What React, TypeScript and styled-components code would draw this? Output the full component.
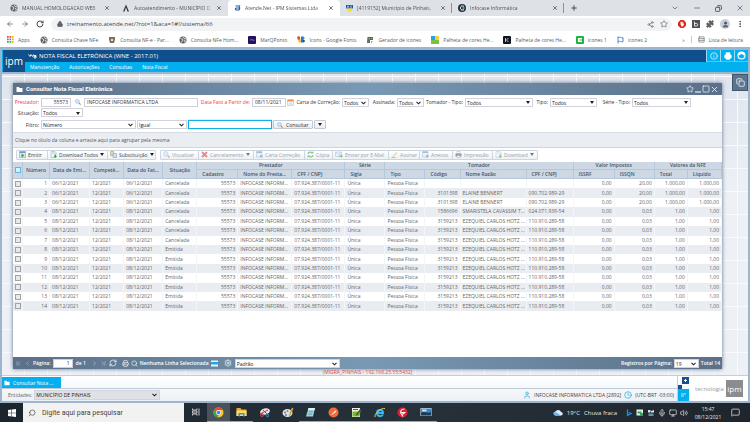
import React from "react";
import styled, { createGlobalStyle, css } from "styled-components";
import {
  ArrowLeft, ArrowRight, RotateCw, Lock, Star, Puzzle, User, MoreVertical, X, Plus, Minus, Copy,
  ChevronDown, Share2, Printer, Info, Search, RefreshCw, Settings, Square, ChevronLeft, ChevronRight,
  ChevronFirst, ChevronLast, Clock, MessageSquare, Volume2, Monitor, Mic, Rows3,
} from "lucide-react";

const ui = `"Open Sans", "Noto Sans", sans-serif`;

const Global = createGlobalStyle`
  *, *::before, *::after { box-sizing: border-box; }
  html, body { margin: 0; padding: 0; }
  body { font: 5px/8px ${ui}; color: #444; overflow: hidden; }
  button, input, select { font: inherit; color: inherit; margin: 0; padding: 0; border: 0; background: none; border-radius: 0; outline: 0; min-width: 0; }
  a { color: inherit; text-decoration: none; }
  svg { display: block; flex: none; }
`;

const Screen = styled.div`
  min-height: 100vh;
  display: flex;
  flex-direction: column;
`;

/* ---------- browser ---------- */
const TabStrip = styled.div`
  height: 16px;
  padding: 0 6px 0 4px;
  display: flex;
  align-items: center;
  background: #dee1e6;
`;
const Tab = styled.div<{ $active?: boolean; $line?: boolean }>`
  flex: 0 1 112px;
  min-width: 0;
  height: ${(p) => (p.$active ? 16 : 10)}px;
  display: flex;
  align-items: center;
  gap: 4px;
  padding: 0 5px 0 6px;
  color: #4e5257;
  background: ${(p) => (p.$active ? "#fff" : "transparent")};
  border-radius: 4px 4px 0 0;
  border-right: 1px solid ${(p) => (p.$line ? "#8d9196" : "transparent")};
  ${(p) => p.$line && css`border-radius: 0;`}
`;
const TabTitle = styled.span`
  flex: 1;
  white-space: nowrap;
  mask-image: linear-gradient(90deg, #000 88%, #0004);
`;
const PlainButton = styled.button`
  display: grid;
  place-items: center;
  color: #4b4f54;
`;
const WindowControls = styled.div`
  margin-left: auto;
  display: flex;
  gap: 14px;
`;
const NewTab = styled(PlainButton)`
  margin-left: 6px;
`;
const AddressRow = styled.div`
  height: 16px;
  display: flex;
  align-items: center;
  padding: 0 6px;
  gap: 6px;
  background: #fff;
  color: #5f6368;
`;
const AddressBar = styled.div`
  flex: 1;
  height: 13px;
  border-radius: 7px;
  background: #f1f3f4;
  display: flex;
  align-items: center;
  gap: 4px;
  padding: 0 3px 0 6px;
  font-size: 6px;
`;
const AddressInput = styled.input`
  flex: 1;
  color: #44474b;
`;
const NavButtons = styled.div`
  display: flex;
  gap: 7px;
  width: 39px;
`;
const Avatar = styled(PlainButton)`
  width: 10px;
  height: 10px;
  border-radius: 50%;
  background: #c9ced6;
`;
const Bookmarks = styled.nav`
  height: 15px;
  display: flex;
  align-items: center;
  gap: 10px;
  padding: 0 7px;
  background: #fff;
  color: #5a5d61;
  white-space: nowrap;
`;
const Bookmark = styled.a`
  display: flex;
  align-items: center;
  gap: 4px;
`;
const BookmarkEnd = styled.div`
  margin-left: auto;
  display: flex;
  align-items: center;
  gap: 6px;
`;
const Divider = styled.span`
  width: 1px;
  height: 7px;
  background: #c4c7cb;
`;

/* ---------- application ---------- */
const AppFrame = styled.div`
  flex: 1;
  display: flex;
  flex-direction: column;
  padding: 3px 2px 2px;
  background: #9db5cd;
`;
const AppHeader = styled.header`
  display: flex;
  height: 22px;
  padding-left: 1px;
  margin-bottom: 2px;
  background: #03b0ef;
`;
const LogoBox = styled.div`
  width: 22px;
  display: grid;
  place-items: center;
  background: #10508b;
  color: #fff;
  font-size: 10px;
  line-height: 18px;
`;
const HeaderMain = styled.div`
  flex: 1;
  display: flex;
  flex-direction: column;
`;
const HeaderTitle = styled.h1`
  margin: 0;
  height: 12px;
  display: flex;
  align-items: center;
  gap: 2px;
  padding-left: 3px;
  background: #0f4f8b;
  color: #fff;
  font-size: 6px;
  font-weight: 500;
`;
const Menu = styled.nav`
  flex: 1;
  display: flex;
  align-items: center;
  gap: 10px;
  padding-left: 5px;
  color: #fff;
`;
const HeaderButtons = styled.div`
  display: flex;
  height: 12px;
`;
const HeaderButton = styled(PlainButton)`
  width: 14px;
  color: #fff;
  border-left: 1px solid #9adcf5;
  border-bottom: 1px solid #55c8f0;
`;
const Desktop = styled.main`
  flex: 1;
  display: flex;
  padding: 9px 0 0 11px;
  background:
    repeating-linear-gradient(90deg, transparent 0 22px, #f8fafc 22px 23px),
    repeating-linear-gradient(0deg, transparent 0 22px, #f8fafc 22px 23px),
    linear-gradient(#dfe5ee, #edf1f6 40%, #edf1f6);
`;
const DesktopCenter = styled.div`
  flex: 1;
  min-width: 0;
  display: flex;
  flex-direction: column;
`;
const SideRail = styled.div`
  width: 26px;
  padding-left: 10px;
  margin-top: -9px;
`;
const RailButton = styled(PlainButton)`
  width: 16px;
  height: 17px;
  background: #5d7690;
  border: 1px solid #40566f;
  color: #fff;
`;
const WindowBox = styled.section`
  flex: 1;
  display: flex;
  flex-direction: column;
  background: #fff;
  box-shadow: 0 0 4px 0 #5c708a;
`;
const barFill = css`
  background: linear-gradient(90deg, #5b7089, #7899b4 50%, #5b7089);
  color: #fff;
`;
const WindowTitle = styled.h2`
  margin: 0;
  height: 12px;
  display: flex;
  align-items: center;
  gap: 3px;
  padding: 0 3px;
  font-family: Roboto, ${ui};
  font-size: 6px;
  font-weight: 700;
  ${barFill}
`;
const TitleButtons = styled.div`
  margin-left: auto;
  display: flex;
  button { color: #fff; }
`;
const Filters = styled.form`
  height: 37px;
  padding-top: 2px;
  display: flex;
  flex-direction: column;
  color: #333;
`;
const FilterRow = styled.div<{ $h: number }>`
  height: ${(p) => p.$h}px;
  display: flex;
  align-items: center;
  gap: 1px;
`;
const Label = styled.label<{ $w: number; $red?: boolean }>`
  width: ${(p) => p.$w}px;
  text-align: right;
  white-space: nowrap;
  padding-right: 1px;
  color: ${(p) => (p.$red ? "#f0353a" : "#333")};
`;
const TextInput = styled.input<{ $w: number; $right?: boolean; $focus?: boolean }>`
  width: ${(p) => p.$w}px;
  height: 9px;
  padding: 0 2px;
  background: #fff;
  border: 1px solid ${(p) => (p.$focus ? "#16aee8" : "#cfcfda")};
  text-align: ${(p) => (p.$right ? "right" : "left")};
  ${(p) => p.$focus && css`box-shadow: 0 0 1px #16aee8;`}
`;
const SelectBox = styled.span<{ $w: number; $h?: number; $fill?: string }>`
  width: ${(p) => p.$w}px;
  height: ${(p) => p.$h ?? 9}px;
  display: inline-grid;
  align-items: center;
  background: ${(p) => p.$fill ?? "#fff"};
  border: 1px solid #d2d2dc;
  color: #222;
  > * { grid-area: 1 / 1; }
  > svg { justify-self: end; margin-right: 2px; pointer-events: none; }
  select { width: 100%; height: 8px; line-height: 8px; appearance: none; padding: 0 1px; }
`;
const IconSlot = styled.span`
  width: 11px;
  display: grid;
  place-items: center;
`;
const SearchButton = styled.button`
  height: 9px;
  display: flex;
  align-items: center;
  gap: 3px;
  padding: 0 3px;
  border: 1px solid #c4cad4;
  background: linear-gradient(#fff, #e8ecf1);
  border-radius: 1px;
`;
const GroupHint = styled.div`
  height: 16px;
  display: flex;
  align-items: center;
  padding-left: 2px;
  background: #eaeef3;
  border-top: 1px solid #d5dce5;
  border-bottom: 1px solid #cdd6e0;
  color: #555;
`;
const Toolbar = styled.div`
  height: 14px;
  display: flex;
  align-items: center;
  gap: 4px;
  padding: 0 0 1px 3px;
`;
const ToolGroup = styled.div`
  display: flex;
  border: 1px solid #ccd6e1;
  background: linear-gradient(#fff, #edf1f5);
  border-radius: 1px;
`;
const ToolButton = styled.button<{ $w: number }>`
  width: ${(p) => p.$w}px;
  height: 8px;
  display: flex;
  align-items: center;
  gap: 2px;
  padding-left: 2px;
  white-space: nowrap;
  color: #444;
  & + & { border-left: 1px solid #ccd6e1; }
  &:disabled { color: #a0a0a6; }
  &:disabled svg { opacity: 0.6; }
`;

/* ---------- grid ---------- */
const GridArea = styled.div`
  flex: 1;
`;
const DataTable = styled.table`
  width: 100%;
  height: 149px;
  table-layout: fixed;
  border-collapse: separate;
  border-spacing: 0;
  color: #666;
  th, td {
    padding: 0 0 0 2px;
    white-space: nowrap;
    line-height: 7px;
  }
  th {
    height: 8px;
    background: #cdd8e4;
    color: #485466;
    font-weight: 600;
    border-right: 1px solid #b5c7da;
    border-bottom: 1px solid #b5c7da;
  }
  thead tr + tr th { height: 9px; }
  td { border-right: 1px solid #f3f6f9; height: 9px; }
  tbody tr:nth-child(even) { background: #e9edf2; }
`;
const Th = styled.th<{ $left?: boolean }>`
  && { padding: ${(p) => (p.$left ? "0 0 0 5px" : "0")}; }
  text-align: ${(p) => (p.$left ? "left" : "center")};
`;
const Td = styled.td<{ $right?: boolean }>`
  && { padding-right: ${(p) => (p.$right ? 2 : 0)}px; }
  text-align: ${(p) => (p.$right ? "right" : "left")};
`;
const Check = styled.input<{ $blue?: boolean }>`
  appearance: none;
  display: block;
  width: 6px;
  height: 6px;
  margin-left: ${(p) => (p.$blue ? 2 : 0)}px;
  border: 1px solid ${(p) => (p.$blue ? "#5bb8e0" : "#a2a2a2")};
  background: ${(p) => (p.$blue ? "#d8f0fb" : "#e9e9e9")};
`;

/* ---------- window footer ---------- */
const Pager = styled.footer`
  height: 12px;
  display: flex;
  align-items: center;
  gap: 3px;
  padding: 0 2px;
  font-weight: 600;
  white-space: nowrap;
  ${barFill}
  button { color: #fff; }
  input, select { font-weight: 400; color: #222; }
`;
const PagerPart = styled.div`
  display: flex;
  align-items: center;
  gap: 2px;
`;
const PagerTools = styled(PagerPart)`
  margin: 0 3px 0 2px;
`;
const PagerEnd = styled(PagerPart)`
  margin-left: auto;
`;
const PageCount = styled.span`
  margin: 0 3px 0 1px;
`;
const DbLabel = styled.div`
  height: 6px;
  line-height: 6px;
  text-align: center;
  color: #ea4548;
`;
const Dock = styled.div`
  display: flex;
  border-top: 1px solid #c3cedc;
  background: linear-gradient(#fff, #edf0f4);
`;
const DockMain = styled.div`
  flex: 1;
`;
const DockTabs = styled.div`
  height: 13px;
  padding-top: 1px;
  border-bottom: 1px solid #bfcbd9;
`;
const DockTab = styled.button`
  width: 59px;
  height: 11px;
  display: flex;
  align-items: center;
  gap: 3px;
  padding-left: 2px;
  background: #03b0ef;
  color: #fff;
`;
const StatusRow = styled.div`
  height: 12px;
  display: flex;
  align-items: center;
  gap: 2px;
  padding: 0 3px 0 6px;
  color: #666;
`;
const StatusInfo = styled.div`
  margin-left: auto;
  display: flex;
  align-items: center;
  gap: 3px;
  color: #454545;
  svg { color: #18a8e6; }
`;
const DockBadge = styled.div`
  width: 13px;
  border-left: 1px solid #c3cedc;
`;
const BrandPanel = styled.div`
  width: 58px;
  height: 25px;
  display: flex;
  align-items: center;
  gap: 2px;
  padding-left: 5px;
  background: #fff;
  color: #9a9a9a;
  font-size: 6px;
`;
const BrandBox = styled.span`
  width: 17px;
  height: 17px;
  display: grid;
  place-items: center;
  background: #8b8c8f;
  color: #fff;
  font-size: 8px;
  line-height: 14px;
`;

/* ---------- operating system bar ---------- */
const TaskBar = styled.footer`
  height: 19px;
  display: flex;
  background: linear-gradient(90deg, #1b252d, #27313a 55%, #1f252c);
  color: #e8e8e8;
`;
const StartButton = styled(PlainButton)`
  width: 23px;
`;
const TaskSearch = styled.label`
  width: 161px;
  display: flex;
  align-items: center;
  gap: 6px;
  padding-left: 5px;
  background: #f2f2f2;
  color: #444;
  font-family: Roboto, ${ui};
  font-size: 7px;
  input { flex: 1; }
  input::placeholder { color: #444; opacity: 1; }
`;
const TaskButton = styled.button<{ $on?: boolean; $line?: boolean }>`
  width: 23px;
  display: grid;
  place-items: center;
  background: ${(p) => (p.$on ? "#4a535a" : "transparent")};
  border-bottom: 1px solid ${(p) => (p.$line ? "#76aee0" : "transparent")};
`;
const Tray = styled.div`
  margin-left: auto;
  display: flex;
  align-items: center;
  gap: 4px;
  padding-right: 10px;
  font-size: 6px;
`;
const TrayIcons = styled.div`
  display: flex;
  gap: 3px;
  padding-left: 4px;
`;
const ClockText = styled.time`
  width: 32px;
  text-align: center;
  font-size: 5px;
  margin-right: 3px;
`;

/* ---------- drawings ---------- */
const Arrow = () => (
  <svg width="4" height="3" viewBox="0 0 4 3"><path d="M0 0h4L2 3z" fill="#222" /></svg>
);
const Caret = () => (
  <svg width="5" height="4" viewBox="0 0 5 4"><path d="M.5.8l2 2 2-2" fill="none" stroke="#222" strokeWidth="1.1" /></svg>
);
const Globe = () => (
  <svg width="8" height="8" viewBox="0 0 16 16"><circle cx="8" cy="8" r="7" fill="#5a5e63" /><path d="M3 5l4 1 1 3-2 1-1 3M9 2l1 3 4 1M10 9l3 1-2 3" stroke="#fff" strokeWidth="1.6" fill="none" /></svg>
);
const Folder = ({ s = 7 }: { s?: number }) => (
  <svg width={s} height={s} viewBox="0 0 14 14"><path d="M1 2h5l1 2h6v8H1z" fill="#fff" /></svg>
);
const Lens = ({ s = 7 }: { s?: number }) => (
  <svg width={s} height={s} viewBox="0 0 14 14"><path d="M9 9l4 4" stroke="#b9823e" strokeWidth="2.4" /><circle cx="5.5" cy="5.5" r="4.5" fill="#cfe8fa" stroke="#8bb4d6" strokeWidth="1.4" /></svg>
);
const Sheet = ({ c, mark }: { c: string; mark: string }) => (
  <svg width="7" height="7" viewBox="0 0 14 14"><path d="M2 1h8l2 2v10H2z" fill="#f4f8fc" stroke="#8aa2bf" /><path d="M4 4h6" stroke="#9db9d6" strokeWidth="1.4" /><path d={mark} fill={c} /></svg>
);
const toolIcons: Record<string, React.ReactNode> = {
  emit: <svg width="7" height="7" viewBox="0 0 14 14"><path d="M1 1h12v12H1z" fill="#d9e9f6" stroke="#6f9dc8" /><path d="M1 1h12v3H1z" fill="#6f9dc8" /><path d="M5 5l6 4-6 4z" fill="#3fa43a" /></svg>,
  down: <Sheet c="#45a63c" mark="M9 7h3v3h2l-3.500 4L7 10h2z" />,
  swap: <svg width="7" height="7" viewBox="0 0 14 14"><path d="M1 1h6v8H1z" fill="#e9d9a6" stroke="#a48d4e" /><path d="M6 5h7v8H6z" fill="#cfe0f2" stroke="#6f93bd" /></svg>,
  lens: <Lens />,
  cross: <svg width="7" height="7" viewBox="0 0 14 14"><path d="M2 2l10 10M12 2L2 12" stroke="#d8433d" strokeWidth="3.600" /></svg>,
  table: <svg width="7" height="7" viewBox="0 0 14 14"><path d="M1 1h11v11H1z" fill="#e4eef8" stroke="#6f93bd" /><path d="M1 1h11v3H1z" fill="#6f93bd" /><path d="M8 8h5v5H8z" fill="#5c9cd8" /></svg>,
  copy: <svg width="7" height="7" viewBox="0 0 14 14"><path d="M2 6c0-4 6-5 8-2M12 8c0 4-6 5-8 2" fill="none" stroke="#45a63c" strokeWidth="2.400" /><path d="M8 5h5V0zM6 9H1v5z" fill="#45a63c" /></svg>,
  mail: <svg width="8" height="7" viewBox="0 0 16 14"><path d="M1 2h12v9H1z" fill="#e4eef8" stroke="#6f93bd" /><path d="M1 2l6 5 6-5" fill="none" stroke="#6f93bd" /><path d="M8 9h4V6l4 4-4 4v-2H8z" fill="#45a63c" /></svg>,
  pen: <svg width="7" height="7" viewBox="0 0 14 14"><path d="M2 12L11 2l2 2-9 8z" fill="#e9b64c" /><path d="M1 13h8" stroke="#777" strokeWidth="1.400" /></svg>,
  print: <svg width="7" height="7" viewBox="0 0 14 14"><path d="M4 1h6v4H4z" fill="#fff" stroke="#777" /><path d="M1 5h12v6H1z" fill="#555d66" /><path d="M4 9h6v4H4z" fill="#fff" stroke="#777" /></svg>,
};

const bookmarkIcons: Record<string, React.ReactNode> = {
  apps: <svg width="7" height="7" viewBox="0 0 14 14">{["#e8453c", "#e8453c", "#f4b400", "#34a853", "#4285f4", "#f4b400", "#34a853", "#34a853", "#f4b400"].map((c, i) => <rect key={i} x={(i % 3) * 5} y={Math.floor(i / 3) * 5} width="3.400" height="3.400" fill={c} />)}</svg>,
  globe: <Globe />,
  par: <svg width="8" height="8" viewBox="0 0 16 16"><path d="M2 2h12v5l-2 7H4L2 7z" fill="#61806c" /><circle cx="8" cy="8" r="3.600" fill="#e03c3c" /><path d="M6 6h4v4H6z" fill="#f4dcd0" /></svg>,
  marq: <svg width="8" height="8" viewBox="0 0 18 18"><rect width="18" height="18" rx="2" fill="#23105f" /><path d="M4 9h3l2-2 2 4 2-2h2" stroke="#a99be0" strokeWidth="1.400" fill="none" /></svg>,
  gf: <svg width="8" height="7" viewBox="0 0 16 14"><path d="M0 1h5l4 12H4z" fill="#fbbc04" /><path d="M1 1h5v6H1z" fill="#ea4335" /><path d="M8 1h4v12H8z" fill="#1a73e8" /><path d="M12 1c4 0 4 6 0 6z" fill="#34a853" /><path d="M12 7c5 0 5 6 0 6z" fill="#0d652d" /></svg>,
  ger: <svg width="8" height="8" viewBox="0 0 16 16"><path d="M3 2h11v6H8v6H2z" fill="#56645a" /><path d="M5 4h3v3H5z" fill="#dd8d4a" /><path d="M10 4h3v2h-3z" fill="#7fc468" /><path d="M3 10h3v3H3zM10 10l3 1-2 4z" fill="#4a85c9" /></svg>,
  pal: <svg width="8" height="8" viewBox="0 0 16 16"><path d="M0 0h16v8H0z" fill="#23a4e0" /><path d="M0 8h16v8H0z" fill="#7cc043" /><path d="M8 0h8v8H8z" fill="#f3d231" /></svg>,
  dark: <svg width="8" height="8" viewBox="0 0 16 16"><rect width="16" height="16" rx="2" fill="#10141f" /><path d="M5 4v8M11 4l-4 4 4 4" stroke="#e8ecf4" strokeWidth="1.600" fill="none" /></svg>,
  green: <svg width="8" height="8" viewBox="0 0 16 16"><rect width="16" height="16" rx="2" fill="#1fb340" /><path d="M4 4h8v8H4z" fill="#fff" /><path d="M7 7h6v2H7z" fill="#1fb340" /></svg>,
  flag: <svg width="7" height="8" viewBox="0 0 14 16"><path d="M2 1v14M2 3c4-2 6 2 10 0v8c-4 2-6-2-10 0" stroke="#4a8be0" strokeWidth="2" fill="none" /></svg>,
};

const Lambda = () => <svg width="8" height="8" viewBox="0 0 16 16"><path d="M2 15L8 1l6 14h-3L8 7l-3 8z" fill="#35383d" /></svg>;
const IpmMark = () => <svg width="7" height="8" viewBox="0 0 14 16"><path d="M3 4h6c3 0 3 8 0 8H5c-3 0-3-4 0-4h5" fill="none" stroke="#1e5ea6" strokeWidth="2.400" /><circle cx="11" cy="3" r="1.600" fill="#24b1ea" /></svg>;
const AcMark = () => <svg width="7" height="8" viewBox="0 0 14 16"><path d="M0 2h14v7H0z" fill="#1b56ac" /><path d="M2 8l2-5 2 5M12 4c-4-2-4 5 0 3" fill="none" stroke="#fff" /><path d="M2 9h11l-3 6H4z" fill="#f7dc2d" /></svg>;
const InfoMark = () => <svg width="8" height="8" viewBox="0 0 16 16"><circle cx="8" cy="8" r="8" fill="#2b3138" /><path d="M12 5C8 2 4 5 5 9s5 4 7 2" fill="none" stroke="#fff" strokeWidth="2" /><path d="M9 6h4v4H9z" fill="#2da4d8" /></svg>;

const osIcons: Record<string, React.ReactNode> = {
  chrome: <svg width="11" height="11" viewBox="0 0 22 22"><circle cx="11" cy="11" r="10" fill="#f9c62b" /><path d="M2.300 6A10 10 0 0119.700 6H11a5 5 0 00-4.600 7z" fill="#e4463a" /><path d="M2.300 6l4.400 7.600A5 5 0 0011 16l-1.500 5A10 10 0 012.300 6z" fill="#36a852" /><circle cx="11" cy="11" r="4.800" fill="#fff" /><circle cx="11" cy="11" r="3.700" fill="#4285f4" /></svg>,
  explorer: <svg width="11" height="10" viewBox="0 0 22 20"><path d="M1 2h8l2 3h10v13H1z" fill="#e8a92f" /><path d="M1 7h20v11H1z" fill="#fbd968" /><path d="M5 12h12v7h-3v-4H8v4H5z" fill="#3a93dc" /></svg>,
  snip: <svg width="12" height="11" viewBox="0 0 24 22"><ellipse cx="12" cy="9" rx="10" ry="6" fill="#e9e6ea" transform="rotate(-15 12 9)" /><path d="M4 13l14-7M8 6l9 9" stroke="#c0353c" strokeWidth="2" /><circle cx="6" cy="16" r="3" fill="none" stroke="#d8414a" strokeWidth="2" /><circle cx="17" cy="17" r="2.500" fill="none" stroke="#4a8fd0" strokeWidth="2" /></svg>,
  paint: <svg width="12" height="11" viewBox="0 0 24 22"><ellipse cx="11" cy="12" rx="10" ry="8" fill="#d8e3ea" /><circle cx="6" cy="11" r="2" fill="#e34b43" /><circle cx="11" cy="8" r="2" fill="#4bab4a" /><circle cx="8" cy="16" r="2" fill="#3d7fd6" /><path d="M13 17L20 1l3 2-7 15z" fill="#e09b3a" /></svg>,
  note: <svg width="11" height="11" viewBox="0 0 22 22"><path d="M7 2h13l-4 17H2z" fill="#9fd4de" /><path d="M7 2h13l-1 4H6z" fill="#e7eef0" /><path d="M8 9h8M7 12h8M6 15h8" stroke="#4b8b98" /></svg>,
  post: <svg width="11" height="11" viewBox="0 0 22 22"><circle cx="11" cy="11" r="10" fill="#f26b3a" /><path d="M6 16l9-9 2 2-8 6z" fill="#fff" /></svg>,
  npp: <svg width="11" height="11" viewBox="0 0 22 22"><path d="M2 2h16v18H2z" fill="#eef3e8" /><path d="M3 9h16l-2 10H3z" fill="#78b82a" /><path d="M9 16L18 4l3 2-9 11z" fill="#4c5b34" /><path d="M4 5h10" stroke="#555" strokeWidth="2" /></svg>,
  ie: <svg width="12" height="11" viewBox="0 0 24 22"><path d="M18 15c-4 6-12 3-12-3 0-8 12-8 12 0H7" fill="none" stroke="#3cb4ec" strokeWidth="4" /><path d="M2 20C0 14 14 1 22 3" fill="none" stroke="#f5cf3c" strokeWidth="2" /></svg>,
  red: <svg width="11" height="11" viewBox="0 0 22 22"><circle cx="11" cy="11" r="10" fill="#da2334" /><path d="M15 4c-7 0-9 5-7 9l4 6M9 11h8M10 14l5-1" stroke="#fff" strokeWidth="2.200" fill="none" /></svg>,
  pic: <svg width="12" height="10" viewBox="0 0 24 20"><path d="M1 2h22v16H1z" fill="#e8eff4" /><path d="M2 3h20v14H2z" fill="#3c86c8" /><path d="M2 12c6-5 12 2 20-2v7H2z" fill="#1c3c55" /><path d="M4 5h9v4H4z" fill="#c8e2f2" /></svg>,
};

/* ---------- data ---------- */
const bookmarks: [string, string][] = [
  ["apps", "Apps"], ["globe", "Consulta Chave NFe"], ["par", "Consulta NF-e - Par..."], ["globe", "Consulta NFe Hom..."],
  ["marq", "MarQPonto"], ["gf", "Icons - Google Fonts"], ["ger", "Gerador de icones"], ["pal", "Palheta de cores He..."],
  ["dark", "Palheta de cores He..."], ["green", "icones 1"], ["flag", "icones 2"],
];
const activeTools: [string, string, number, boolean][] = [
  ["emit", "Emitir", 30, false], ["down", "Download Todos", 60, true], ["swap", "Substituição", 48, true],
];
const lockedTools: [string, string, number, boolean][] = [
  ["lens", "Visualizar", 37, false], ["cross", "Cancelamento", 55, true], ["table", "Carta Correção", 51, false],
  ["copy", "Cópia", 28, false], ["mail", "Enviar por E-Mail", 56, false], ["pen", "Assinar", 31, false],
  ["table", "Anexos", 33, false], ["print", "Impressão", 40, false], ["down", "Download", 45, true],
];
const colWidths = [10, 27, 40, 34, 39, 34, 41, 54, 53, 40, 40, 35, 66, 47, 41, 40, 33, 34];

type Row = { date: string; status: string; code: string; name: string; doc: string; iss: string; value: string };
const ezequiel = { code: "3159213", name: "EZEQUIEL CARLOS HOTZ ...", doc: "110.910.289-58" };
const elaine = { code: "3101398", name: "ELAINE BENNERT", doc: "090.702.989-29" };
const maristela = { code: "1586696", name: "SMARISTELA CAVASSIM T...", doc: "024.071.939-54" };
const unknown = { code: "", name: "", doc: "" };
const rows: Row[] = Array.from({ length: 14 }, (_, i) => {
  const who = i === 0 ? unknown : i < 3 ? elaine : i === 3 ? maristela : ezequiel;
  return {
    ...who,
    date: i < 3 ? "06/12/2021" : "08/12/2021",
    status: i < 7 ? "Cancelada" : "Emitida",
    iss: i < 3 ? "20,00" : "0,03",
    value: i < 3 ? "1.000,00" : "1,00",
  };
});

function Select({ id, w, h, value, fill, label, solid }: { id: string; w: number; h?: number; value: string; fill?: string; label?: string; solid?: boolean }) {
  return (
    <SelectBox $w={w} $h={h} $fill={fill}>
      <select id={id} aria-label={label} defaultValue={value}><option>{value}</option></select>
      {solid ? <Arrow /> : <Caret />}
    </SelectBox>
  );
}

function Tools({ items, disabled }: { items: [string, string, number, boolean][]; disabled?: boolean }) {
  return (
    <ToolGroup>
      {items.map(([icon, text, w, more]) => (
        <ToolButton key={text} type="button" $w={w} disabled={disabled}>
          {toolIcons[icon]}{text}{more && <Arrow />}
        </ToolButton>
      ))}
    </ToolGroup>
  );
}

const CloseTab = () => <PlainButton aria-label="Fechar guia"><X size={6} strokeWidth={3} /></PlainButton>;

function Browser() {
  return (
    <>
      <TabStrip>
        <Tab><Globe /><TabTitle>MANUAL HOMOLOGACAO WEB</TabTitle><CloseTab /></Tab>
        <Tab><Lambda /><TabTitle>Autoatendimento - MUNICÍPIO D</TabTitle><CloseTab /></Tab>
        <Tab $active><IpmMark /><TabTitle>Atende.Net - IPM Sistemas Ltda</TabTitle><CloseTab /></Tab>
        <Tab $line><AcMark /><TabTitle>[4119152] Município de Pinhais,</TabTitle><CloseTab /></Tab>
        <Tab $line><InfoMark /><TabTitle>Infocase Informática</TabTitle><CloseTab /></Tab>
        <NewTab aria-label="Nova guia"><Plus size={8} strokeWidth={3} /></NewTab>
        <WindowControls>
          <PlainButton aria-label="Pesquisar guias"><ChevronDown size={8} /></PlainButton>
          <PlainButton aria-label="Minimizar"><Minus size={8} /></PlainButton>
          <PlainButton aria-label="Restaurar"><Copy size={7} strokeWidth={3} transform="scale(-1 1)" /></PlainButton>
          <PlainButton aria-label="Fechar janela"><X size={8} /></PlainButton>
        </WindowControls>
      </TabStrip>
      <AddressRow>
        <NavButtons>
          <PlainButton aria-label="Voltar"><ArrowLeft size={8} /></PlainButton>
          <PlainButton aria-label="Avançar"><ArrowRight size={8} /></PlainButton>
          <PlainButton aria-label="Recarregar"><RotateCw size={8} strokeWidth={3} /></PlainButton>
        </NavButtons>
        <AddressBar>
          <Lock size={6} fill="#5f6368" strokeWidth={3} />
          <AddressInput aria-label="Endereço" defaultValue="treinamento.atende.net/?rot=1&aca=1#!/sistema/66" />
          <Share2 size={7} />
          <IconSlot><Star size={8} /></IconSlot>
        </AddressBar>
        <PlainButton aria-label="Bloqueador"><svg width="8" height="8" viewBox="0 0 16 16"><path d="M5 0h6l5 5v6l-5 5H5l-5-5V5z" fill="#e2231a" /><path d="M5 8V4h1.500v3H7V3h1.500v4H9V4h1.500v4l1-1 1 1-3 5H7z" fill="#fff" /></svg></PlainButton>
        <PlainButton aria-label="Extensão"><svg width="8" height="8" viewBox="0 0 16 16"><path d="M0 0h16v16H0z" fill="#4d5054" /><path d="M5 3v9h4a2.500 2.500 0 000-5H5" fill="none" stroke="#fff" strokeWidth="1.600" /></svg></PlainButton>
        <PlainButton aria-label="Extensões"><Puzzle size={8} fill="#5f6368" /></PlainButton>
        <Avatar aria-label="Perfil"><User size={7} fill="#4b5a70" /></Avatar>
        <PlainButton aria-label="Menu"><MoreVertical size={8} strokeWidth={3} /></PlainButton>
      </AddressRow>
      <Bookmarks>
        {bookmarks.map(([icon, text], i) => <Bookmark key={i} href="#">{bookmarkIcons[icon]}{text}</Bookmark>)}
        <BookmarkEnd><span>»</span><Divider /><Bookmark href="#"><Rows3 size={7} />Lista de leitura</Bookmark></BookmarkEnd>
      </Bookmarks>
    </>
  );
}

function Grid() {
  return (
    <DataTable>
      <colgroup>{colWidths.map((w, i) => <col key={i} width={w} />)}</colgroup>
      <thead>
        <tr>
          <Th rowSpan={2}><Check type="checkbox" $blue aria-label="Selecionar todos" /></Th>
          {["Número", "Data de Emi...", "Competê...", "Data do Fat...", "Situação"].map((t) => <Th key={t} rowSpan={2}>{t}</Th>)}
          <Th colSpan={3}>Prestador</Th><Th>Série</Th><Th colSpan={4}>Tomador</Th><Th colSpan={2}>Valor Impostos</Th><Th colSpan={2}>Valores da NFE</Th>
        </tr>
        <tr>
          {["Cadastro", "Nome do Presta...", "CPF / CNPJ", "Sigla", "Tipo", "Código", "Nome Razão", "CPF / CNPJ", "ISSRF", "ISSQN", "Total", "Líquido"].map((t, i) => <Th key={i} $left>{t}</Th>)}
        </tr>
      </thead>
      <tbody>
        {rows.map((r, i) => (
          <tr key={i}>
            <Td><Check type="checkbox" aria-label={`Selecionar ${i + 1}`} /></Td>
            <Td $right>{i + 1}</Td>
            <Td>{r.date}</Td><Td>12/2021</Td><Td>{r.date}</Td><Td>{r.status}</Td>
            <Td $right>55573</Td><Td>INFOCASE INFORM...</Td><Td>07.924.387/0001-11</Td>
            <Td>Única</Td><Td>Pessoa Física</Td><Td $right>{r.code}</Td><Td>{r.name}</Td><Td>{r.doc}</Td>
            <Td $right>0,00</Td><Td $right>{r.iss}</Td><Td $right>{r.value}</Td><Td $right>{r.value}</Td>
          </tr>
        ))}
      </tbody>
    </DataTable>
  );
}

function InvoiceWindow() {
  return (
    <WindowBox>
      <WindowTitle><Folder /> Consultar Nota Fiscal Eletrônica
        <TitleButtons>
          <PlainButton aria-label="Favorito"><Star size={8} /></PlainButton>
          <PlainButton aria-label="Minimizar"><svg width="8" height="8" viewBox="0 0 8 8"><path d="M1 7h6" stroke="#fff" /></svg></PlainButton>
          <PlainButton aria-label="Maximizar"><Square size={8} /></PlainButton>
          <PlainButton aria-label="Fechar"><X size={9} /></PlainButton>
        </TitleButtons>
      </WindowTitle>
      <Filters onSubmit={(e) => e.preventDefault()}>
        <FilterRow $h={10}>
          <Label $w={27} $red htmlFor="prest">Prestador:</Label>
          <TextInput id="prest" $w={30} $right defaultValue="55573" />
          <IconSlot><Lens s={6} /></IconSlot>
          <TextInput aria-label="Nome do prestador" $w={114} defaultValue="INFOCASE INFORMATICA LTDA" />
          <Label $w={52} $red htmlFor="date">Data Fato a Partir de:</Label>
          <TextInput id="date" $w={34} defaultValue="08/11/2021" />
          <svg width="7" height="7" viewBox="0 0 14 14"><path d="M1 2h12v11H1z" fill="#fff" stroke="#9db5d0" /><path d="M1 1h12v4H1z" fill="#f0924e" /><path d="M3 8h8M3 10.500h8" stroke="#9db5d0" /></svg>
          <Label $w={46} htmlFor="carta">Carta de Correção:</Label>
          <Select id="carta" w={27} value="Todos" />
          <Label $w={26} htmlFor="assin">Assinada:</Label>
          <Select id="assin" w={27} value="Todos" />
          <Label $w={39} htmlFor="tomador">Tomador - Tipo:</Label>
          <Select id="tomador" w={68} value="Todos" solid />
          <Label $w={15} htmlFor="tipo">Tipo:</Label>
          <Select id="tipo" w={47} value="Todos" solid />
          <Label $w={33} htmlFor="serie">Série - Tipo:</Label>
          <Select id="serie" w={59} value="Todos" solid />
        </FilterRow>
        <FilterRow $h={11}>
          <Label $w={27} htmlFor="sit">Situação:</Label>
          <Select id="sit" w={42} value="Todos" solid />
        </FilterRow>
        <FilterRow $h={13}>
          <Label $w={27} htmlFor="filtro">Filtro:</Label>
          <Select id="filtro" w={95} value="Número" />
          <Select id="op" w={50} value="Igual" label="Operador" />
          <TextInput aria-label="Valor do filtro" $w={84} $focus />
          <SearchButton type="submit"><Lens s={6} />Consultar</SearchButton>
          <SearchButton type="button" aria-label="Mais opções"><Arrow /></SearchButton>
        </FilterRow>
      </Filters>
      <GroupHint>Clique no título da coluna e arraste aqui para agrupar pela mesma</GroupHint>
      <Toolbar><Tools items={activeTools} /><Tools items={lockedTools} disabled /></Toolbar>
      <GridArea><Grid /></GridArea>
      <Pager>
        <PagerPart>
          <PlainButton aria-label="Primeira"><ChevronFirst size={7} opacity={0.6} /></PlainButton>
          <PlainButton aria-label="Anterior"><ChevronLeft size={7} opacity={0.6} /></PlainButton>
          <label htmlFor="page">Página:</label>
          <TextInput id="page" $w={20} $right defaultValue="1" />
          <PageCount>de 1</PageCount>
          <PlainButton aria-label="Próxima"><ChevronRight size={7} opacity={0.6} /></PlainButton>
          <PlainButton aria-label="Última"><ChevronLast size={7} opacity={0.6} /></PlainButton>
          <PlainButton aria-label="Atualizar"><RefreshCw size={8} /></PlainButton>
        </PagerPart>
        <PagerTools>
          <PlainButton aria-label="Imprimir"><Printer size={7} /></PlainButton>
          <PlainButton aria-label="Pesquisar"><Search size={7} /></PlainButton>
          <span>Nenhuma Linha Selecionada</span>
          <svg width="7" height="7" viewBox="0 0 14 14"><path d="M0 1h14v12H0z" fill="#eef7fc" /><path d="M0 4h14v5H0z" fill="#1ea8e4" /></svg>
        </PagerTools>
        <PlainButton aria-label="Configurar"><Settings size={8} /></PlainButton>
        <Select id="layout" w={105} value="Padrão" label="Layout" />
        <PagerEnd>
          <label htmlFor="pp">Registros por Página:</label>
          <Select id="pp" w={25} value="19" />
          <span>Total 14</span>
        </PagerEnd>
      </Pager>
    </WindowBox>
  );
}

export default function App() {
  return (
    <Screen>
      <Global />
      <Browser />
      <AppFrame>
        <AppHeader>
          <LogoBox>ipm</LogoBox>
          <HeaderMain>
            <HeaderTitle>
              <svg width="9" height="6" viewBox="0 0 18 12"><path d="M1 3l3 4 2-4 3 4 2-4M11 5h5v5h-4V7h4" fill="none" stroke="#fff" strokeWidth="1.800" /></svg>
              NOTA FISCAL ELETRÔNICA (WNE - 2017.01)
            </HeaderTitle>
            <Menu>{["Manutenção", "Autorizações", "Consultas", "Nota Fiscal"].map((t) => <a key={t} href="#">{t}</a>)}</Menu>
          </HeaderMain>
          <HeaderButtons>
            <HeaderButton aria-label="Informações"><Info size={8} /></HeaderButton>
            <HeaderButton aria-label="Imprimir"><Printer size={8} fill="#fff" /></HeaderButton>
            <HeaderButton aria-label="Suporte"><svg width="9" height="9" viewBox="0 0 18 18"><circle cx="9" cy="9" r="8" fill="#fff" /><path d="M3 9c3 0 4-3 6-3s3 3 6 3c0 8-12 8-12 0z" fill="#03b0ef" /></svg></HeaderButton>
          </HeaderButtons>
        </AppHeader>
        <Desktop>
          <DesktopCenter>
            <InvoiceWindow />
            <DbLabel>(MIGRA_PINHAIS - 192.168.25.55:5432)</DbLabel>
          </DesktopCenter>
          <SideRail><RailButton aria-label="Janelas"><Copy size={9} /></RailButton></SideRail>
        </Desktop>
        <Dock>
          <DockMain>
            <DockTabs><DockTab><Folder s={6} />Consultar Nota ...</DockTab></DockTabs>
            <StatusRow>
              <label htmlFor="ent">Entidades:</label>
              <Select id="ent" w={126} h={10} value="MUNICÍPIO DE PINHAIS" fill="#dfe1e5" />
              <StatusInfo><User size={8} />INFOCASE INFORMATICA LTDA [2892]<Clock size={8} />(UTC-BRT -03:00)</StatusInfo>
            </StatusRow>
          </DockMain>
          <DockBadge>
            <svg width="12" height="25" viewBox="0 0 12 25"><path d="M4 1h7v7H4zM0 9h4v4H0z" fill="#164f94" /><path d="M6 4.500h3M7.500 3v3" stroke="#fff" /><path d="M0 13h11v12H0z" fill="#03b0ef" /><path d="M3 18h5M3 20h3" stroke="#b6e8fb" /></svg>
          </DockBadge>
          <BrandPanel>tecnologia<BrandBox>ipm</BrandBox></BrandPanel>
        </Dock>
      </AppFrame>
      <TaskBar>
        <StartButton aria-label="Iniciar"><svg width="8" height="8" viewBox="0 0 16 16"><path d="M0 2l7-1v6.500H0zM8 1l8-1v7.500H8zM0 8.500h7V15l-7-1zM8 8.500h8V16l-8-1z" fill="#fff" /></svg></StartButton>
        <TaskSearch><Search size={8} transform="scale(-1 1)" /><input placeholder="Digite aqui para pesquisar" /></TaskSearch>
        <TaskButton aria-label="Visão de tarefas"><svg width="8" height="8" viewBox="0 0 16 16"><path d="M1 1v3h9V1M1 15v-3h9v3M1 6h9v4H1zM14 1v14" fill="none" stroke="#e8e8e8" strokeWidth="1.600" /></svg></TaskButton>
        {Object.keys(osIcons).map((k, i) => (
          <TaskButton key={k} aria-label={k} $on={i === 0} $line={i < 2 || i > 3}>{osIcons[k]}</TaskButton>
        ))}
        <Tray>
          <svg width="10" height="7" viewBox="0 0 20 14"><path d="M5 13a4 4 0 010-8 6 6 0 0111 1 3.500 3.500 0 010 7z" fill="#dcecf9" /><path d="M5 13a4 4 0 01-2-7c4 0 6 3 13 7z" fill="#75b4ea" /></svg>
          <span>19°C</span><span>Chuva fraca</span>
          <TrayIcons>
            <svg width="8" height="8" viewBox="0 0 16 16"><path d="M5 1v12l7-4-4-2" fill="none" stroke="#1f95e8" strokeWidth="2.600" /></svg>
            <svg width="8" height="8" viewBox="0 0 16 16"><path d="M1 1h13v12H1z" fill="#e8eee8" /><path d="M3 5h8v4H3zM8 8h6v6H8z" fill="#2fa35a" /></svg>
            <svg width="8" height="8" viewBox="0 0 16 16"><path d="M2 2h5v5H2zM8 4l6-2v5H8z" fill="#d0e4f4" /><path d="M3 9h10v5H3z" fill="#6c8fae" /></svg>
            <Mic size={8} /><Monitor size={8} /><Volume2 size={8} />
          </TrayIcons>
          <ClockText>15:47<br />08/12/2021</ClockText>
          <MessageSquare size={9} />
        </Tray>
      </TaskBar>
    </Screen>
  );
}
